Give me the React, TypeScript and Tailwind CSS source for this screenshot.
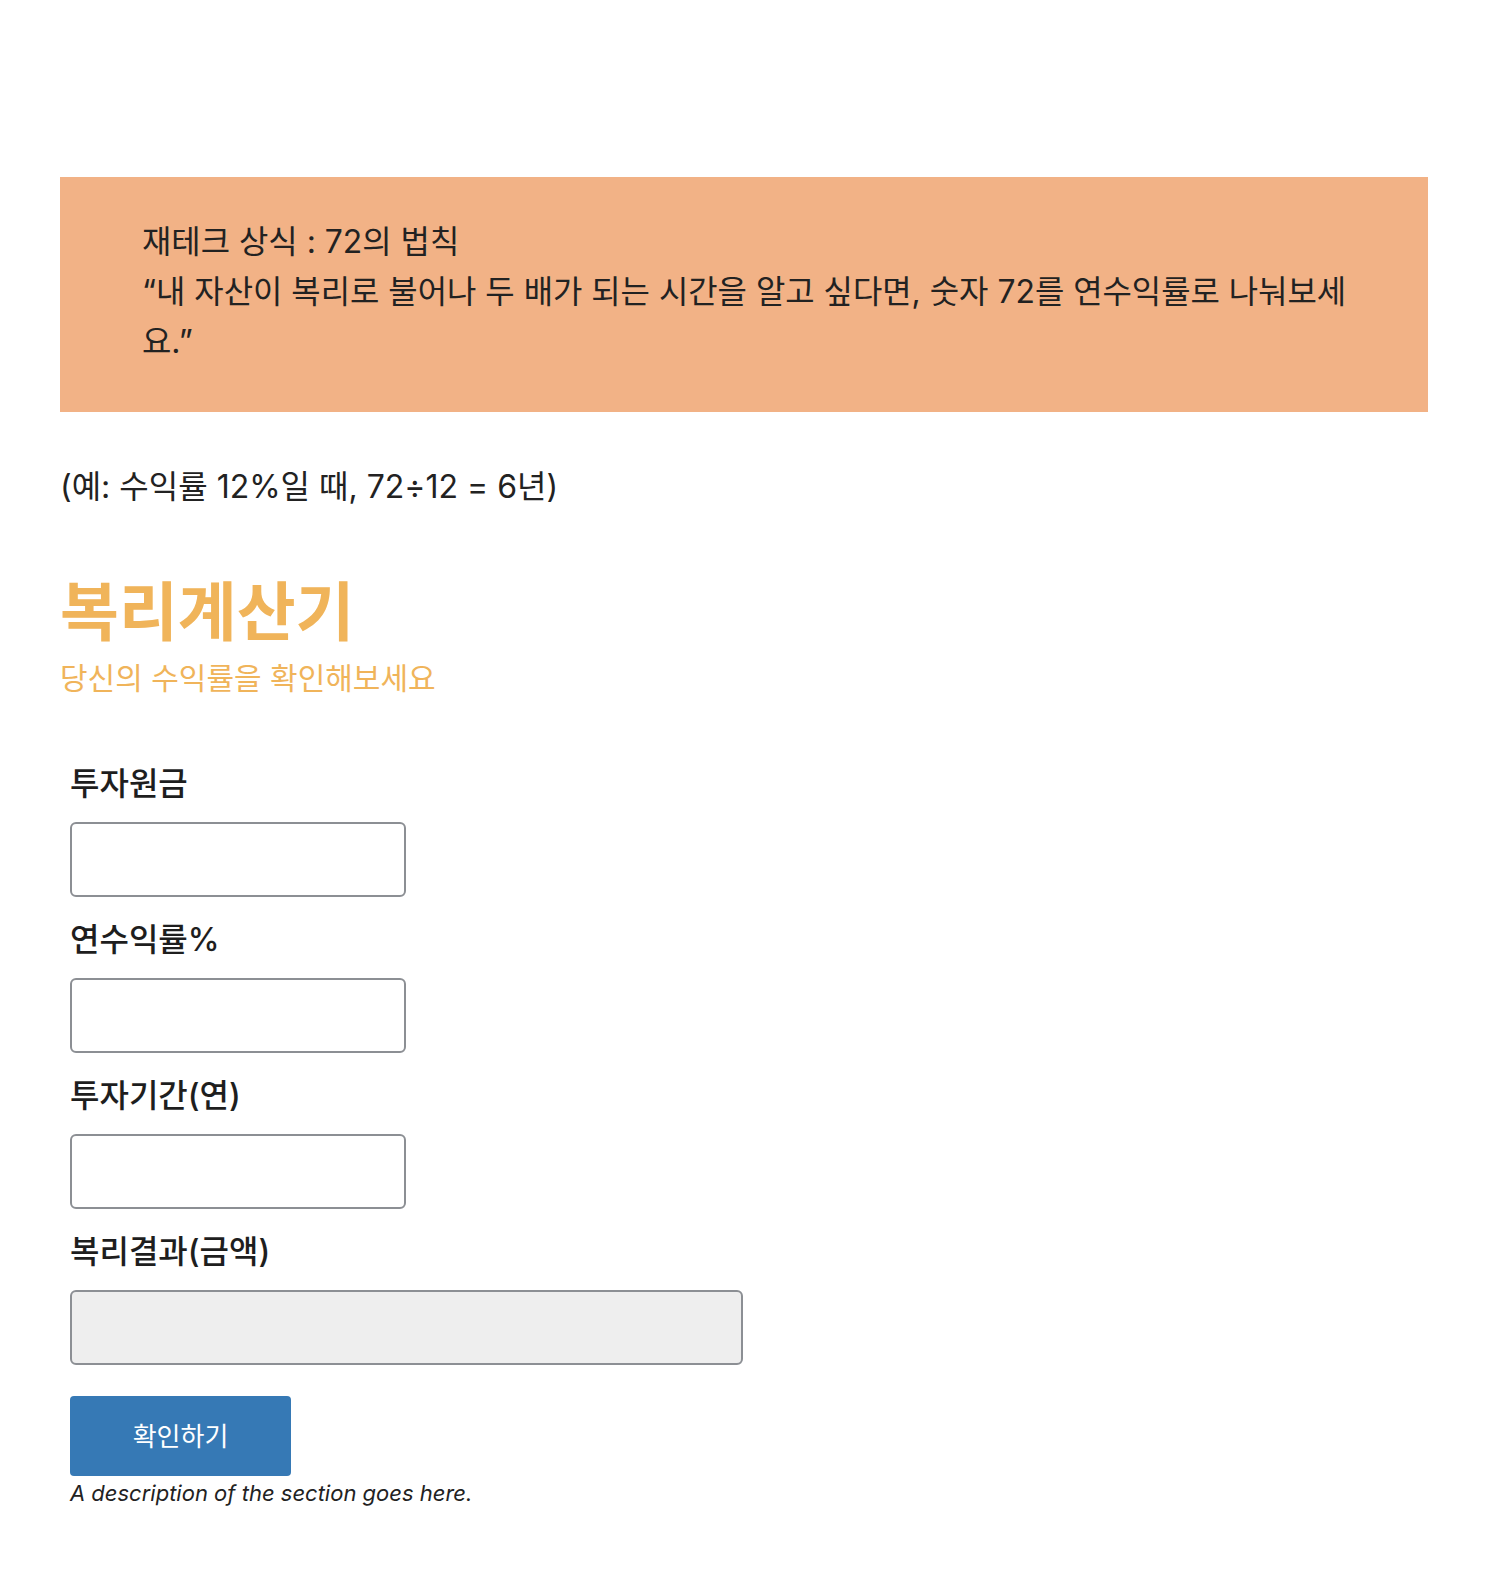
import { useState } from 'react';

const font = "font-['Inter','Noto_Sans_CJK_KR',sans-serif]";

const Field = ({
  label,
  wide,
  readOnly,
  value,
  onChange,
}: {
  label: string;
  wide?: boolean;
  readOnly?: boolean;
  value: string;
  onChange?: (v: string) => void;
}) => (
  <div className="flex flex-col">
    <label className="text-[32px] leading-[40px] font-medium text-[#1e1e1e] mb-[18px]">{label}</label>
    <input
      type="text"
      value={value}
      readOnly={readOnly}
      onChange={(e) => onChange?.(e.target.value)}
      className={`h-[75px] rounded-[6px] border-2 border-[#8c8f94] px-3 text-[24px] outline-none ${
        wide ? 'w-[673px] bg-[#eeeeee]' : 'w-[336px] bg-white'
      }`}
    />
  </div>
);

export default function App() {
  const [principal, setPrincipal] = useState('');
  const [rate, setRate] = useState('');
  const [years, setYears] = useState('');
  const [result, setResult] = useState('');

  const calc = () => {
    const p = parseFloat(principal);
    const r = parseFloat(rate);
    const y = parseFloat(years);
    if (isNaN(p) || isNaN(r) || isNaN(y)) return;
    setResult(Math.round(p * Math.pow(1 + r / 100, y)).toLocaleString('ko-KR'));
  };

  return (
    <div className={`${font} min-h-[1590px] bg-white text-[#1e1e1e] px-[60px] pt-[177px]`}>
      <div className="w-[1368px] bg-[#f2b286] pl-[82px] pr-[71px] pt-[40px] pb-[45px] text-[31.9px] leading-[50px] text-[#222]">
        <p>재테크 상식 : 72의 법칙</p>
        <p>“내 자산이 복리로 불어나 두 배가 되는 시간을 알고 싶다면, 숫자 72를 연수익률로 나눠보세요.”</p>
      </div>

      <p className="mt-[52px] text-[32px] leading-[46px] text-[#222]">(예: 수익률 12%일 때, 72÷12 = 6년)</p>

      <h1 className="mt-[67px] text-[64px] leading-[70px] font-semibold text-[#f0b45a]">복리계산기</h1>
      <p className="mt-[11px] text-[30px] leading-[40px] text-[#f0b45a]">당신의 수익률을 확인해보세요</p>

      <div className="mt-[66px] pl-[10px] flex flex-col gap-[23px]">
        <Field label="투자원금" value={principal} onChange={setPrincipal} />
        <Field label="연수익률%" value={rate} onChange={setRate} />
        <Field label="투자기간(연)" value={years} onChange={setYears} />
        <Field label="복리결과(금액)" value={result} wide readOnly />
      </div>

      <div className="pl-[10px] mt-[31px]">
        <button
          onClick={calc}
          className="w-[221px] h-[80px] rounded-[4px] bg-[#3679b5] text-white text-[26px]"
        >
          확인하기
        </button>
        <p className="mt-[2px] text-[22px] leading-[30px] italic text-[#222]">A description of the section goes here.</p>
      </div>
    </div>
  );
}
